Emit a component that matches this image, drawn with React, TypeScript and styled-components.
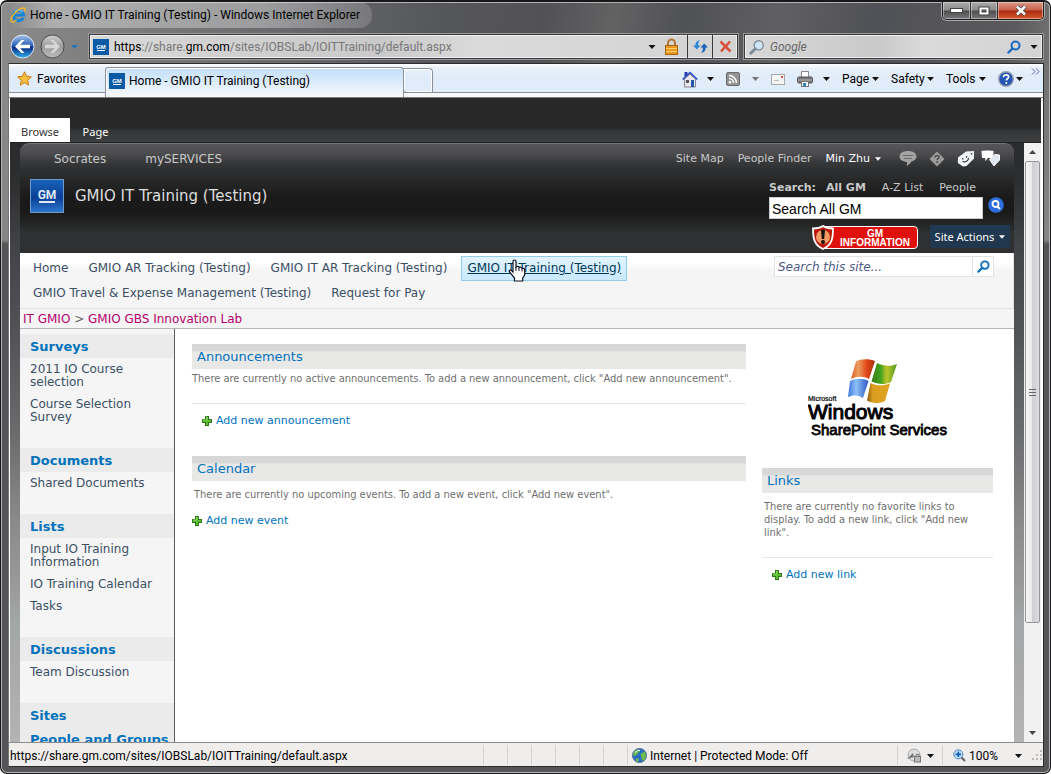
import React from 'react';
import styled, { createGlobalStyle, css } from 'styled-components';

const ui = 'Roboto, "Noto Sans", sans-serif';
const label = '"Noto Sans", "Open Sans", sans-serif';
const wide = '"DejaVu Sans", sans-serif';
const narrow = '"DejaVu Sans Condensed", "DejaVu Sans", sans-serif';

const GlobalStyle = createGlobalStyle`
  *, *::before, *::after { box-sizing: border-box; }
  body { margin: 0; background: #fff; font: 12px/16px ${ui}; color: #000; }
  a { color: inherit; text-decoration: none; }
  button { border: 0; padding: 0; margin: 0; background: none; font: inherit; color: inherit; }
  input { border: 0; padding: 0; margin: 0; background: none; outline: 0; min-width: 0; border-radius: 0; }
  h1, h2, p, ul { margin: 0; padding: 0; font-size: inherit; font-weight: inherit; }
  li { list-style: none; }
  svg { display: block; flex: none; }
`;

const Window = styled.div`
  display: flex;
  flex-direction: column;
  height: 100vh;
  overflow: hidden;
  padding: 0 6px 6px 7px;
  border: 1px solid #18181a;
  border-top-width: 2px;
  border-radius: 7px;
  box-shadow: inset 0 0 0 1px #b4b4b4;
  background:
    linear-gradient(to bottom, transparent 238px, #555558 242px),
    linear-gradient(100deg, #8b8b8b 0, #858585 50px, #55565a 38%, #525256 46%, #626263 52%, #505155 58%, #606062 66%, #505156 74%, #5a5a5c 86%, #969696 94%, #a5a5a5 100%);
`;

const TitleBar = styled.header`
  display: flex;
  align-items: flex-start;
  justify-content: space-between;
  height: 31px;
`;
const TitleText = styled.h1`
  display: flex;
  align-items: center;
  gap: 4px;
  height: 26px;
  padding: 0 12px 0 2px;
  border-radius: 12px;
  background: linear-gradient(to right, #ffffff00, #ffffff55 12%, #ffffff55 70%, #ffffff28);
  white-space: nowrap;
`;
const WindowButtons = styled.div`
  display: flex;
  height: 18px;
  border: 1px solid #202020;
  border-top: 0;
  border-radius: 0 0 5px 5px;
  overflow: hidden;
  box-shadow: 0 0 0 1px #aaa;
`;
const WindowButton = styled.button<{ $close?: boolean }>`
  display: flex;
  align-items: center;
  justify-content: center;
  width: ${p => (p.$close ? 46 : 27)}px;
  border-left: 1px solid #333;
  box-shadow: inset 0 0 0 1px #ffffff66;
  background: ${p => (p.$close
    ? 'linear-gradient(#d99a8a, #c8604a 48%, #a92a10 52%, #d85a30)'
    : 'linear-gradient(#a9a9a9, #8b8b8b 48%, #4e4e50 52%, #77777a)')};
  &:first-child { border-left: 0; }
`;

const NavRow = styled.div`
  display: flex;
  align-items: center;
  height: 30px;
  padding: 0 1px 3px 2px;
`;
const History = styled.div`
  display: flex;
  align-items: center;
  width: 79px;
  gap: 5px;
`;
const fieldLook = css`
  display: flex;
  align-items: center;
  height: 25px;
  border: 1px solid #3a3a3c;
  background: linear-gradient(90deg, #d8d8d8, #c9c9c9 45%, #d9dad9 60%, #d3d3d3);
  box-shadow: inset 0 0 0 1px #f0f0f0, 0 0 0 1px #9a9a9a;
`;
const AddressField = styled.div`
  ${fieldLook}
  flex: 1;
  padding-left: 3px;
`;
const Url = styled.div`
  flex: 1;
  padding-left: 5px;
  color: #777;
  white-space: nowrap;
  b { font-weight: 400; color: #000; }
`;
const AddressButton = styled.button<{ $ruled?: boolean }>`
  display: flex;
  align-items: center;
  justify-content: center;
  width: 25px;
  height: 23px;
  border-left: ${p => (p.$ruled ? '1px solid #3a3a3c' : '0')};
`;
const Secure = styled.span`
  padding-right: 8px;
`;
const EngineField = styled.label`
  ${fieldLook}
  width: 299px;
  margin-left: 6px;
  padding: 0 4px;
  gap: 5px;
  input { flex: 1; font: italic 12px/16px ${ui}; }
  input::placeholder { color: #666; opacity: 1; }
  button:last-child { padding-left: 4px; }
`;

const Client = styled.div`
  flex: 1;
  min-height: 0;
  display: flex;
  flex-direction: column;
  border: 1px solid #2c2c2e;
  border-left-color: #777;
  background: #fff;
`;
const CommandBar = styled.div`
  display: flex;
  height: 34px;
  align-items: flex-start;
  border-bottom: 1px solid #7b7d7e;
  background: linear-gradient(#fdfeff 0, #e9f1fb 4px, #e0ecf9 12px, #e0ecf9 28px, #8d9096 28px, #8d9096 29px, #f8f9fb 29px);
`;
const FavoritesButton = styled.button`
  display: flex;
  align-items: center;
  gap: 5px;
  width: 96px;
  height: 30px;
  padding: 0 0 1px 8px;
`;
const PageTab = styled.a`
  display: flex;
  align-items: center;
  gap: 4px;
  width: 299px;
  height: 30px;
  margin-top: 3px;
  padding: 0 0 4px 3px;
  border: 1px solid #8d9096;
  border-bottom: 0;
  border-radius: 3px 3px 0 0;
  background: linear-gradient(#c2dffa, #dcecfc 50%, #f8f9fb);
  box-shadow: inset 1px 1px 0 #fff;
  white-space: nowrap;
`;
const NewTab = styled.button`
  width: 29px;
  height: 25px;
  margin-top: 4px;
  border: 1px solid #8d9096;
  border-left: 0;
  border-radius: 0 4px 0 4px;
  box-shadow: inset 0 0 0 1px #fff;
`;
const Commands = styled.div`
  display: flex;
  align-items: center;
  justify-content: flex-end;
  gap: 12px;
  flex: 1;
  height: 30px;
  padding-right: 3px;
`;
const Command = styled.button<{ $w: number }>`
  display: flex;
  align-items: center;
  justify-content: space-between;
  width: ${p => p.$w}px;
  height: 24px;
  white-space: nowrap;
`;
const Chevrons = styled.button`
  align-self: flex-start;
  width: 9px;
  height: 15px;
  margin-left: -4px;
`;

const Page = styled.div`
  flex: 1;
  min-height: 0;
  display: flex;
  flex-direction: column;
  margin: 0 2px 0 1px;
`;
const Ribbon = styled.div`
  display: flex;
  align-items: flex-end;
  flex: none;
  height: 45px;
  border-bottom: 1px solid #222;
  background: linear-gradient(#272827 0, #272827 30px, #303132 31px, #38393a 36px, #3d3e40 44px);
`;
const RibbonTab = styled.button<{ $on?: boolean }>`
  width: ${p => (p.$on ? 60 : 51)}px;
  height: 24px;
  padding-top: 3px;
  font: 11px/16px ${label};
  color: ${p => (p.$on ? '#333' : '#fff')};
  background: ${p => (p.$on ? '#fff' : 'none')};
`;
const Viewport = styled.div`
  flex: 1;
  min-height: 0;
  display: flex;
`;
const Backdrop = styled.div`
  flex: 1;
  min-width: 0;
  display: flex;
  flex-direction: column;
  padding: 0 10px;
  background: linear-gradient(#2a2b2c, #2d2e30 40px, #444548 110px, #505154 180px, #6a6b6d 290px, #8b8b8b 380px, #999 440px, #a3a7a8 480px, #aaa 530px, #b4b4b4 600px);
`;
const TopLinks = styled.div`
  display: flex;
  align-items: center;
  flex: none;
  height: 30px;
  padding: 0 14px 0 34px;
  border-top: 1px solid #737476;
  border-radius: 9px 9px 0 0;
  background: linear-gradient(#56565a, #4d4d50 9px, #38393b 18px, #2b2c2d 28px);
  font: 11px/16px ${wide};
  color: #c9c9c9;
  white-space: nowrap;
`;
const PortalLinks = styled.nav`
  display: flex;
  gap: 39px;
  flex: 1;
  font-size: 12px;
`;
const UserLinks = styled.nav`
  display: flex;
  gap: 14px;
  margin-right: 18px;
`;
const TopLink = styled.a<{ $bright?: boolean }>`
  display: flex;
  align-items: center;
  gap: 5px;
  color: ${p => (p.$bright ? '#fff' : '#c9c9c9')};
`;
const SocialIcons = styled.div`
  display: flex;
  align-items: center;
  gap: 12px;
  button:nth-child(3) { margin-right: -6px; }
`;
const Banner = styled.div`
  display: flex;
  justify-content: space-between;
  flex: none;
  height: 80px;
  padding: 6px 3px 0 10px;
  background: linear-gradient(#2d2e2f, #1a1a1a 24px, #1a1a1a 40px, #232424 50px, #2f3031 60px);
`;
const SiteName = styled.div`
  display: flex;
  align-items: center;
  gap: 11px;
  height: 34px;
  font: 15px/22px ${wide};
  color: #dedede;
`;
const BannerTools = styled.div`
  display: flex;
  flex-direction: column;
  width: 242px;
`;
const Scopes = styled.div`
  display: flex;
  align-items: center;
  gap: 16px;
  height: 18px;
  font: 11px/16px ${wide};
  color: #c9c9c9;
  > b { margin-right: -6px; }
`;
const GlobalSearch = styled.form`
  display: flex;
  gap: 5px;
  height: 28px;
  input {
    width: 214px;
    height: 22px;
    padding: 1px 2px 0;
    border: 1px solid #ccc;
    background: #fff;
    font: 14px/18px "Liberation Sans", sans-serif;
  }
  button { width: 20px; height: 16px; }
`;
const Actions = styled.div`
  display: flex;
  justify-content: flex-end;
  align-items: flex-start;
  gap: 12px;
  padding-right: 1px;
`;
const InfoBadge = styled.a`
  display: flex;
  height: 25px;
  font: bold 10px/9px "Liberation Sans", sans-serif;
  color: #fff;
  text-align: center;
  svg { margin-right: -12px; z-index: 1; }
`;
const InfoLabel = styled.span`
  width: 96px;
  height: 23px;
  margin-top: 1px;
  padding: 2px 0 0 10px;
  border: 1px solid #fff;
  border-radius: 4px;
  background: #e0100c;
`;
const SiteActions = styled.button`
  display: flex;
  align-items: center;
  justify-content: center;
  gap: 5px;
  width: 80px;
  height: 23px;
  font: 11px/16px ${label};
  color: #fff;
  background: linear-gradient(#1f3a54, #21374d);
  white-space: nowrap;
`;

const NavBand = styled.div`
  display: flex;
  justify-content: space-between;
  flex: none;
  padding: 3px 19px 2px 7px;
  border-right: 1px solid #e3e3e3;
  border-bottom: 1px solid #e3e3e3;
  background: linear-gradient(#fff 0, #fff 10px, #f5f5f5 18px);
`;
const NavLinks = styled.nav`
  display: flex;
  flex-wrap: wrap;
  flex: 1;
  max-width: 660px;
  column-gap: 8px;
  font: 12px/23px ${wide};
  color: #3b4f65;
`;
const NavLink = styled.a<{ $hot?: boolean }>`
  position: relative;
  height: 25px;
  padding: 0 5px;
  border: 1px solid ${p => (p.$hot ? '#91cdeb' : 'transparent')};
  background: ${p => (p.$hot ? 'linear-gradient(#e3f4ff, #c9e9fd)' : 'none')};
  color: ${p => (p.$hot ? '#003759' : 'inherit')};
  text-decoration: ${p => (p.$hot ? 'underline' : 'none')};
  white-space: nowrap;
  svg { position: absolute; left: 46px; top: 2px; }
`;
const SiteSearch = styled.form`
  display: flex;
  width: 220px;
  height: 21px;
  border: 1px solid #e3e3e3;
  background: #fff;
  input { flex: 1; padding: 0 3px; font: italic 12px/18px ${wide}; }
  input::placeholder { color: #4d5b85; opacity: 1; }
  button { display: flex; align-items: center; justify-content: center; width: 21px; border-left: 1px solid #e3e3e3; }
`;
const Crumbs = styled.nav`
  flex: none;
  height: 20px;
  padding-left: 3px;
  border-bottom: 1px solid #b5b6b7;
  background: #f5f5f5;
  font: 12px/20px ${wide};
  color: #666;
  a { color: #b4006b; }
`;
const Columns = styled.div`
  display: flex;
  flex: 1;
  min-height: 0;
  background: #fff;
`;
const Sidebar = styled.nav`
  flex: none;
  width: 155px;
  overflow: hidden;
  padding-top: 5px;
  border-right: 1px solid #5b5c5e;
  background: #f5f5f5;
  font: 12px/13px ${wide};
  color: #3b4f65;
`;
const Group = styled.section<{ $tight?: boolean }>`
  padding-bottom: ${p => (p.$tight ? 0 : 20)}px;
  h2 {
    height: 24px;
    padding-left: 10px;
    background: #ebebeb;
    font: bold 13px/25px ${wide};
    color: #0072bc;
    white-space: nowrap;
  }
  li { padding: 5px 20px 4px 10px; }
`;
const Main = styled.main`
  display: flex;
  flex: 1;
  gap: 16px;
  padding: 15px 21px 0 17px;
`;
const LeftZone = styled.div`
  flex: 1;
  min-width: 0;
`;
const RightZone = styled.div`
  flex: none;
  width: 231px;
`;
const PartTitle = styled.h2`
  height: 25px;
  padding-left: 5px;
  background: linear-gradient(#d6d7d7 0, #d8d9d8 7px, #e8e8e7 8px);
  font: 13px/25px ${wide};
  color: #0072bc;
`;
const PartText = styled.p<{ $rule?: boolean; $inset?: boolean }>`
  padding: ${p => (p.$inset ? '7px 20px' : '3px 0')};
  padding-left: ${p => (p.$inset ? 2 : 0)}px;
  padding-bottom: ${p => (p.$rule ? 18 : 3)}px;
  border-bottom: ${p => (p.$rule ? '1px solid #e6e6e6' : '0')};
  font: 11px/13px ${narrow};
  color: #6f6f6f;
`;
const AddLink = styled.a<{ $inset?: boolean }>`
  display: flex;
  align-items: center;
  gap: 4px;
  padding-left: ${p => (p.$inset ? 10 : 0)}px;
  height: 34px;
  font: 11px/16px ${wide};
  color: #0072bc;
`;
const Part = styled.section`
  margin-bottom: 18px;
`;
const LogoBox = styled.div`
  height: 124px;
  padding: 14px 0 0 46px;
`;

const Scrollbar = styled.div`
  display: flex;
  flex-direction: column;
  align-items: center;
  flex: none;
  width: 17px;
  background: #f1f1f1;
`;
const ScrollButton = styled.button`
  display: flex;
  align-items: center;
  justify-content: center;
  width: 16px;
  height: 18px;
`;
const Track = styled.div`
  flex: 1;
  width: 15px;
`;
const Thumb = styled.div`
  display: flex;
  align-items: center;
  justify-content: center;
  height: 82%;
  border: 1px solid #979797;
  border-radius: 2px;
  background: linear-gradient(90deg, #f5f5f5, #e9e9eb 45%, #cfd0d3 50%, #dcdce0);
`;

const StatusBar = styled.footer`
  display: flex;
  align-items: center;
  flex: none;
  height: 24px;
  border-top: 1px solid #8b8b8b;
  background: #f0eded;
  white-space: nowrap;
`;
const StatusCell = styled.div<{ $w?: number; $pad?: number }>`
  display: flex;
  align-items: center;
  gap: 3px;
  flex: ${p => (p.$w ? 'none' : '1')};
  width: ${p => (p.$w ? `${p.$w}px` : 'auto')};
  height: 20px;
  padding: 2px 0 0 ${p => p.$pad ?? 4}px;
  border-left: ${p => (p.$w ? '1px solid #d5d2d2' : '0')};
`;
const StatusArrow = styled.button`
  margin-left: auto;
  margin-right: 8px;
`;

const Down = ({ color = '#111', w = 7 }: { color?: string; w?: number }) => (
  <svg width={w} height="4" viewBox="0 0 7 4"><path d="M0 0h7L3.5 4z" fill={color} /></svg>
);
const GmMark = () => (
  <svg width="16" height="16" viewBox="0 0 16 16">
    <rect width="16" height="16" fill="#0b5aa5" />
    <text x="8" y="10" textAnchor="middle" fontFamily="Liberation Sans, sans-serif" fontWeight="bold" fontSize="6" fill="#fff">GM</text>
    <rect x="4" y="11" width="8" height="1" fill="#fff" />
  </svg>
);
const GmBadge = () => (
  <svg width="34" height="34" viewBox="0 0 34 34">
    <defs><linearGradient id="gm" x2="0" y2="1"><stop stopColor="#1763b9" /><stop offset=".55" stopColor="#0a3f95" /><stop offset="1" stopColor="#2b75cb" /></linearGradient></defs>
    <rect width="34" height="34" fill="#6f9acb" />
    <rect x="1" y="1" width="32" height="32" fill="url(#gm)" />
    <text x="17" y="20" textAnchor="middle" fontFamily="Roboto, sans-serif" fontWeight="bold" fontSize="12" fill="#dfe9f5">GM</text>
    <rect x="9" y="22" width="16" height="2" fill="#dfe9f5" />
  </svg>
);
const IeLogo = () => (
  <svg width="16" height="16" viewBox="0 0 16 16" fill="none">
    <path d="M13.3 10.8A5.2 5.2 0 1 1 13.8 8.2H4.5" stroke="#1583d8" strokeWidth="2.8" />
    <path d="M12.8 5.2A5 5 0 0 0 4.5 5" stroke="#68c7f8" strokeWidth="1.2" />
    <path d="M1.5 14.8C-1 12 6.5 1.5 13.5 1c2.5 0 1.8 2.2.8 3.8M1.5 14.8c1.3.7 3.4-.4 5-1.8" stroke="#f2b52b" strokeWidth="1.4" />
  </svg>
);
const Orb = ({ back }: { back?: boolean }) => (
  <svg width="25" height="25" viewBox="0 0 25 25">
    <defs>
      <linearGradient id="orbB" x2="0" y2="1"><stop stopColor="#a5c4ec" /><stop offset=".45" stopColor="#2e63b5" /><stop offset=".55" stopColor="#0b2e86" /><stop offset="1" stopColor="#2cb0f0" /></linearGradient>
      <linearGradient id="orbG" x2="0" y2="1"><stop stopColor="#cfcfcf" /><stop offset=".5" stopColor="#9c9c9c" /><stop offset="1" stopColor="#bdbdbd" /></linearGradient>
    </defs>
    <circle cx="12.5" cy="12.5" r="11.5" fill={back ? 'url(#orbB)' : 'url(#orbG)'} stroke={back ? '#e3e8f0' : '#4c4c4c'} />
    {back
      ? <path d="M5 12.5 11.5 6h3l-4.3 4.7H20v3.6h-9.8l4.3 4.7h-3z" fill="#fff" />
      : <path d="M20 12.5 13.5 6h-3l4.3 4.7H5v3.6h9.8l-4.3 4.7h3z" fill="#d6d6d6" />}
  </svg>
);
const Lock = () => (
  <svg width="15" height="17" viewBox="0 0 15 17">
    <path d="M4 8V5a3.5 3.5 0 0 1 7 0v3" fill="none" stroke="#b07632" strokeWidth="2" />
    <rect x="1.5" y="7.5" width="12" height="9" fill="#e79a1d" stroke="#a8640c" />
    <path d="M2 10.5h11M2 13.5h11" stroke="#f9ce70" />
  </svg>
);
const Refresh = () => (
  <svg width="15" height="15" viewBox="0 0 15 15">
    <path d="M0 6.5h2.3C2.3 3.5 3.8 1.5 7 1 5.5 2.5 5 4 5.200 6.5h2.3L3.8 10.5z" fill="#2d86d8" />
    <path d="M15 8.5h-2.3c0 3-1.5 5-4.7 5.5 1.5-1.5 2-3 1.8-5.5H7.500l3.7-4z" fill="#1a62b8" />
  </svg>
);
const Cross = () => (
  <svg width="13" height="13" viewBox="0 0 13 13"><path d="M1.5 1.5l10 10M11 1.5l-9 10" stroke="#d9503a" strokeWidth="2.6" /></svg>
);
const Lens = ({ color = '#1a68c0', size = 14, glass = 'none' }: { color?: string; size?: number; glass?: string }) => (
  <svg width={size} height={size} viewBox="0 0 14 14">
    <circle cx="8.5" cy="5.5" r="4" fill={glass} stroke={color} strokeWidth={glass === 'none' ? 2 : 1.2} />
    <path d="M5.5 8.5l-4 4" stroke={color} strokeWidth="2.4" strokeLinecap="round" />
  </svg>
);
const Star = () => (
  <svg width="15" height="15" viewBox="0 0 15 15"><path d="M7.5.8l2 4.5 4.8.6-3.6 3.3 1 4.9-4.2-2.5-4.2 2.5 1-4.9L.7 5.9l4.8-.6z" fill="#f8bd43" stroke="#c97a12" /></svg>
);
const House = () => (
  <svg width="16" height="17" viewBox="0 0 16 17">
    <path d="M2.5 8v8h11V8L8 3z" fill="#e8e8ee" stroke="#85858f" />
    <path d="M2.5 6V1h3v3" fill="#2a3ca8" />
    <path d="M.7 8.5L8 1.5l7.3 7" fill="none" stroke="#2748c8" strokeWidth="1.5" />
    <rect x="4" y="9" width="3" height="3" fill="#555" /><rect x="9" y="9" width="3" height="7" fill="#1f58a8" />
  </svg>
);
const Feed = () => (
  <svg width="14" height="14" viewBox="0 0 14 14">
    <rect x=".5" y=".5" width="13" height="13" rx="1.5" fill="#929292" stroke="#6b6b6b" />
    <circle cx="4" cy="10.2" r="1.3" fill="#fff" />
    <path d="M3 6.5a4.5 4.5 0 0 1 4.5 4.5M3 3.5A7.5 7.5 0 0 1 10.5 11" fill="none" stroke="#fff" strokeWidth="1.5" />
  </svg>
);
const Mail = () => (
  <svg width="14" height="11" viewBox="0 0 14 11"><rect x=".5" y=".5" width="13" height="10" fill="#f6f6f6" stroke="#a8a8a8" /><path d="M3 6.5h5" stroke="#bbb" /><rect x="10" y="2" width="2" height="2" fill="#df5144" /></svg>
);
const Printer = () => (
  <svg width="16" height="16" viewBox="0 0 16 16">
    <path d="M4.5 6V.5h7V6" fill="#fff" stroke="#888" />
    <rect x=".5" y="6" width="15" height="6" rx="1.5" fill="#77777b" stroke="#525256" />
    <path d="M1 9h14" stroke="#b7b7ba" /><rect x="4.5" y="10.5" width="7" height="5" fill="#fff" stroke="#777" /><rect x="6" y="12" width="3" height="3" fill="#2e83c5" />
  </svg>
);
const Help = () => (
  <svg width="16" height="16" viewBox="0 0 16 16">
    <circle cx="8" cy="8" r="7.3" fill="#2456b4" stroke="#9aa2b0" strokeWidth="1.4" />
    <path d="M5.5 6.2C5.5 4.6 6.6 3.8 8 3.8s2.6.9 2.6 2.2C10.6 7.6 8.3 7.7 8.3 9.6" fill="none" stroke="#fff" strokeWidth="1.7" /><circle cx="8.3" cy="12" r="1.1" fill="#fff" />
  </svg>
);
const Bubble = () => (
  <svg width="18" height="17" viewBox="0 0 18 17">
    <path d="M9 1c5 0 8.5 2.2 8.5 5.3 0 2.9-2.5 4.5-5 5.2-1.5 2-3 3.8-5 4.5.5-1.5.8-2.8.5-4C3.5 11.7.5 9.5.5 6.3.5 3.2 4 1 9 1z" fill="#a3a3a3" />
    <path d="M4 5.5h10M5 8.5h8" stroke="#6a6a6a" />
  </svg>
);
const Diamond = () => (
  <svg width="16" height="16" viewBox="0 0 16 16"><path d="M8 .5L15.5 8 8 15.5.5 8z" fill="#9b9b9b" /><path d="M6 6.5C6 5.2 6.9 4.6 8 4.6s2 .7 2 1.7C10 7.5 8.1 7.5 8.1 9" fill="none" stroke="#444" strokeWidth="1.3" /><circle cx="8.1" cy="11" r=".9" fill="#444" /></svg>
);
const TagFace = () => (
  <svg width="18" height="18" viewBox="0 0 18 18"><path d="M1 7.5L9 1.5l8-.5V8.5L9.5 16 6 16.5.8 13z" fill="#f0f3f8" /><circle cx="14.5" cy="3.8" r=".9" fill="#444" /><path d="M5.8 8v1.5M9.5 6v1.5M5.5 11.5c3 1.2 6-.5 6-3.5" fill="none" stroke="#333" strokeWidth="1.2" /></svg>
);
const TagNotes = () => (
  <svg width="19" height="17" viewBox="0 0 19 17"><path d="M.5 1C3 .2 10 .2 12.5 1V8H7l-2.5 3L4 8H1z" fill="#fff" /><path d="M8.5 9.5L14 4.5l4.5.5V10L13 16z" fill="#dfe6ef" stroke="#f7f9fb" /></svg>
);
const GoSearch = () => (
  <svg width="16" height="16" viewBox="0 0 16 16"><circle cx="8" cy="8" r="7.8" fill="#2f6ddd" /><circle cx="7.5" cy="7" r="3" fill="none" stroke="#fff" strokeWidth="1.8" /><path d="M9.5 9.5L12 12" stroke="#fff" strokeWidth="2" /></svg>
);
const Shield = () => (
  <svg width="22" height="25" viewBox="0 0 22 25">
    <path d="M11 1C8 3 4 3.5 1 3.5 1 13 2 20 11 24c9-4 10-11 10-20.5C18 3.5 14 3 11 1z" fill="#b8190b" stroke="#fff" strokeWidth="1.8" />
    <circle cx="11" cy="12" r="7" fill="#f19a64" /><path d="M9 5h4l-.8 9h-2.4z" fill="#111" /><circle cx="11" cy="17" r="2" fill="#111" />
  </svg>
);
const Plus = () => (
  <svg width="10" height="10" viewBox="0 0 10 10">
    <path d="M3 0h4v3h3v4H7v3H3V7H0V3h3z" fill="#2c7715" />
    <path d="M4 1h2v3h3v2H6v3H4V6H1V4h3z" fill="#5cbb35" />
    <path d="M4 1h1v3H1" fill="none" stroke="#8ed762" />
  </svg>
);
const Hand = () => (
  <svg width="20" height="23" viewBox="0 0 20 23"><path d="M5 2.5C5 .5 8 .5 8 2.5V8c1-1 3-.8 3 .5 1-.8 2.8-.3 3 1 1.5-.5 2.7.3 2.7 1.5V16l-2 3v3H6.500v-3L1.500 13c-.8-1.5.7-2.6 2-1.5L5 13z" fill="#fff" stroke="#101020" strokeWidth="1.2" /><path d="M8 8v4M11 9v3M14 10v2.5" stroke="#101020" /></svg>
);
const Globe = () => (
  <svg width="15" height="15" viewBox="0 0 15 15"><circle cx="7.5" cy="7.5" r="7" fill="#2a6fc4" stroke="#4e7290" /><path d="M2 3.5L6.5 1l1.5 2-2 2.5L3 8 1 7zM8.5 6l4-2.5 1.8 4-1.8 4.5-2.5.5-.5-3zM4 10l3 1-1 3-2-1z" fill="#6cbd4d" /><path d="M3 4.5q2.5-3 5-2" stroke="#e5f2fc" fill="none" /></svg>
);
const ZoneLock = () => (
  <svg width="16" height="15" viewBox="0 0 16 15"><circle cx="8" cy="7" r="6" fill="#ddd" stroke="#aaa" /><path d="M1 11l6-6 1 4z" fill="#777" /><rect x="8.5" y="8.5" width="6" height="5.5" fill="#bbb" stroke="#777" /><path d="M10 8V6.5h3V8" fill="none" stroke="#777" /></svg>
);
const ZoomGlass = () => (
  <svg width="13" height="13" viewBox="0 0 13 13"><path d="M8.5 8.5L12 12" stroke="#666" strokeWidth="2.2" /><circle cx="5.3" cy="5.3" r="4.5" fill="#c9e2f8" stroke="#4a82bd" /><path d="M5.3 2.5v5.6M2.5 5.3h5.6" stroke="#0b5cb8" strokeWidth="1.7" /></svg>
);
const SharePointLogo = () => (
  <svg width="150" height="82" viewBox="0 0 150 82" role="img" aria-label="Microsoft Windows SharePoint Services">
    <defs>
      <linearGradient id="fr"><stop stopColor="#e4561f" /><stop offset=".3" stopColor="#e9a061" /><stop offset=".65" stopColor="#e4481a" /><stop offset="1" stopColor="#a8300e" /></linearGradient>
      <linearGradient id="fg"><stop stopColor="#3b7d13" /><stop offset=".35" stopColor="#3fa21f" /><stop offset=".6" stopColor="#bcc62a" /><stop offset="1" stopColor="#4c9a1d" /></linearGradient>
      <linearGradient id="fb"><stop stopColor="#3f74dc" /><stop offset=".4" stopColor="#8cc2f7" /><stop offset="1" stopColor="#2c55c4" /></linearGradient>
      <linearGradient id="fy"><stop stopColor="#8a5a12" /><stop offset=".25" stopColor="#dc9e20" /><stop offset="1" stopColor="#e0a31f" /></linearGradient>
    </defs>
    <path d="M48 3.5C52 .5 62 .5 67 3l-6 18c-5-3-12-3-18 0z" fill="url(#fr)" />
    <path d="M69 5c6 3 14 4 20 1L83 24c-6 3-13 2.5-19.5-.5z" fill="url(#fg)" />
    <path d="M42 23c6-3 13-3 18.5 0L55 40c-5-3.5-11-3-15-1z" fill="url(#fb)" />
    <path d="M62.500 25c6 3 13 3 19.5.5L77 43c-6 3-14 2.5-18-.5z" fill="url(#fy)" />
    <g fontFamily="Liberation Sans, sans-serif" fill="#000" stroke="#000">
      <text x="0" y="43" fontSize="7" strokeWidth=".2">Microsoft</text>
      <text x="0" y="61" fontSize="21" strokeWidth="1">Windows</text>
      <text x="3" y="77" fontSize="15" strokeWidth=".8">SharePoint Services</text>
    </g>
  </svg>
);

const groups: { title: string; items: string[]; tight?: boolean }[] = [
  { title: 'Surveys', items: ['2011 IO Course selection', 'Course Selection Survey'] },
  { title: 'Documents', items: ['Shared Documents'] },
  { title: 'Lists', items: ['Input IO Training Information', 'IO Training Calendar', 'Tasks'] },
  { title: 'Discussions', items: ['Team Discussion'] },
  { title: 'Sites', items: [], tight: true },
  { title: 'People and Groups', items: [], tight: true },
];
const navLinks = [
  'Home', 'GMIO AR Tracking (Testing)', 'GMIO IT AR Tracking (Testing)', 'GMIO IT Training (Testing)',
  'GMIO Travel & Expense Management (Testing)', 'Request for Pay',
];
const hoveredLink = 3;

export default function App() {
  return (
    <Window>
      <GlobalStyle />
      <TitleBar>
        <TitleText><IeLogo />Home - GMIO IT Training (Testing) - Windows Internet Explorer</TitleText>
        <WindowButtons>
          <WindowButton aria-label="Minimize"><svg width="13" height="5"><rect x=".5" y=".5" width="12" height="4" fill="#fff" stroke="#444" /></svg></WindowButton>
          <WindowButton aria-label="Maximize"><svg width="12" height="10"><rect x="1" y="1" width="10" height="8" fill="#fff" stroke="#444" /><rect x="4" y="4" width="4" height="2" fill="#666" stroke="#444" /></svg></WindowButton>
          <WindowButton $close aria-label="Close"><svg width="12" height="11" viewBox="0 0 12 11"><path d="M2 1.5l8 8M10 1.5l-8 8" stroke="#444" strokeWidth="4" /><path d="M2 1.5l8 8M10 1.5l-8 8" stroke="#fff" strokeWidth="2.5" /></svg></WindowButton>
        </WindowButtons>
      </TitleBar>
      <NavRow>
        <History>
          <button aria-label="Back"><Orb back /></button>
          <button aria-label="Forward"><Orb /></button>
          <button aria-label="Recent pages"><Down w={9} color="#2474b8" /></button>
        </History>
        <AddressField>
          <GmMark />
          <Url><b>https</b>://share.<b>gm.com</b>/sites/IOBSLab/IOITTraining/default.aspx</Url>
          <AddressButton aria-label="Show address list"><Down w={8} /></AddressButton>
          <Secure><Lock /></Secure>
          <AddressButton $ruled aria-label="Refresh"><Refresh /></AddressButton>
          <AddressButton $ruled aria-label="Stop"><Cross /></AddressButton>
        </AddressField>
        <EngineField>
          <Lens color="#7d8a96" glass="#cfe6f7" size={16} />
          <input placeholder="Google" aria-label="Google" />
          <button aria-label="Search the web"><Lens /></button>
          <button aria-label="Search options"><Down w={8} /></button>
        </EngineField>
      </NavRow>
      <Client>
        <CommandBar>
          <FavoritesButton><Star />Favorites</FavoritesButton>
          <PageTab href="#"><GmMark />Home - GMIO IT Training (Testing)</PageTab>
          <NewTab aria-label="New tab" />
          <Commands>
            <Command $w={32} aria-label="Home"><House /><Down /></Command>
            <Command $w={33} aria-label="Feeds"><Feed /><Down color="#777" /></Command>
            <Command $w={14} aria-label="Read mail"><Mail /></Command>
            <Command $w={33} aria-label="Print"><Printer /><Down /></Command>
            <Command $w={37}>Page<Down /></Command>
            <Command $w={43}>Safety<Down /></Command>
            <Command $w={40}>Tools<Down /></Command>
            <Command $w={25} aria-label="Help"><Help /><Down /></Command>
            <Chevrons aria-label="More commands"><svg width="9" height="7" viewBox="0 0 9 7"><path d="M1 .5l3 3-3 3M5 .5l3 3-3 3" fill="none" stroke="#6262b0" /></svg></Chevrons>
          </Commands>
        </CommandBar>
        <Page>
          <Ribbon>
            <RibbonTab $on>Browse</RibbonTab>
            <RibbonTab>Page</RibbonTab>
          </Ribbon>
          <Viewport>
            <Backdrop>
              <TopLinks>
                <PortalLinks>
                  <TopLink href="#">Socrates</TopLink>
                  <TopLink href="#">mySERVICES</TopLink>
                </PortalLinks>
                <UserLinks>
                  <TopLink href="#">Site Map</TopLink>
                  <TopLink href="#">People Finder</TopLink>
                  <TopLink href="#" $bright>Min Zhu <Down w={6} color="#fff" /></TopLink>
                </UserLinks>
                <SocialIcons>
                  <button aria-label="Comments"><Bubble /></button>
                  <button aria-label="Help"><Diamond /></button>
                  <button aria-label="I like it"><TagFace /></button>
                  <button aria-label="Tags and notes"><TagNotes /></button>
                </SocialIcons>
              </TopLinks>
              <Banner>
                <SiteName><GmBadge />GMIO IT Training (Testing)</SiteName>
                <BannerTools>
                  <Scopes><b>Search:</b><a href="#"><b>All GM</b></a><a href="#">A-Z List</a><a href="#">People</a></Scopes>
                  <GlobalSearch>
                    <input defaultValue="Search All GM" aria-label="Search All GM" />
                    <button type="button" aria-label="Search"><GoSearch /></button>
                  </GlobalSearch>
                  <Actions>
                    <InfoBadge href="#"><Shield /><InfoLabel>GM INFORMATION</InfoLabel></InfoBadge>
                    <SiteActions>Site Actions <Down w={6} color="#fff" /></SiteActions>
                  </Actions>
                </BannerTools>
              </Banner>
              <NavBand>
                <NavLinks>
                  {navLinks.map((text, i) => (
                    <NavLink key={text} href="#" $hot={i === hoveredLink}>{text}{i === hoveredLink && <Hand />}</NavLink>
                  ))}
                </NavLinks>
                <SiteSearch>
                  <input placeholder="Search this site..." aria-label="Search this site" />
                  <button type="button" aria-label="Search site"><Lens color="#0e70bd" size={13} /></button>
                </SiteSearch>
              </NavBand>
              <Crumbs><a href="#">IT GMIO</a> &gt; <a href="#">GMIO GBS Innovation Lab</a></Crumbs>
              <Columns>
                <Sidebar>
                  {groups.map(g => (
                    <Group key={g.title} $tight={g.tight}>
                      <h2><a href="#">{g.title}</a></h2>
                      <ul>{g.items.map(t => <li key={t}><a href="#">{t}</a></li>)}</ul>
                    </Group>
                  ))}
                </Sidebar>
                <Main>
                  <LeftZone>
                    <Part>
                      <PartTitle>Announcements</PartTitle>
                      <PartText $rule>There are currently no active announcements. To add a new announcement, click "Add new announcement".</PartText>
                      <AddLink href="#" $inset><Plus />Add new announcement</AddLink>
                    </Part>
                    <Part>
                      <PartTitle>Calendar</PartTitle>
                      <PartText $inset>There are currently no upcoming events. To add a new event, click "Add new event".</PartText>
                      <AddLink href="#"><Plus />Add new event</AddLink>
                    </Part>
                  </LeftZone>
                  <RightZone>
                    <LogoBox><SharePointLogo /></LogoBox>
                    <Part>
                      <PartTitle>Links</PartTitle>
                      <PartText $rule $inset>There are currently no favorite links to display. To add a new link, click "Add new link".</PartText>
                      <AddLink href="#" $inset><Plus />Add new link</AddLink>
                    </Part>
                  </RightZone>
                </Main>
              </Columns>
            </Backdrop>
            <Scrollbar>
              <ScrollButton aria-label="Scroll up"><svg width="7" height="4"><path d="M0 4h7L3.5 0z" fill="#444" /></svg></ScrollButton>
              <Track><Thumb><svg width="7" height="8"><path d="M0 1.5h7M0 4.5h7M0 7.5h7" stroke="#666" /></svg></Thumb></Track>
              <ScrollButton aria-label="Scroll down"><Down color="#444" /></ScrollButton>
            </Scrollbar>
          </Viewport>
        </Page>
        <StatusBar>
          <StatusCell $pad={1}>https://share.gm.com/sites/IOBSLab/IOITTraining/default.aspx</StatusCell>
          {[0, 1, 2, 3, 4, 5].map(i => <StatusCell key={i} $w={24} />)}
          <StatusCell $w={270}><Globe />Internet | Protected Mode: Off</StatusCell>
          <StatusCell $w={45} $pad={8}><ZoneLock /><StatusArrow aria-label="Protection options"><Down /></StatusArrow></StatusCell>
          <StatusCell $w={88} $pad={10}><ZoomGlass />100%<StatusArrow aria-label="Zoom level"><Down /></StatusArrow></StatusCell>
          <svg width="13" height="12"><path d="M10 1h2v2h-2zM6 5h2v2H6zM10 5h2v2h-2zM2 9h2v2H2zM6 9h2v2H6zM10 9h2v2h-2z" fill="#bbb" /></svg>
        </StatusBar>
      </Client>
    </Window>
  );
}
